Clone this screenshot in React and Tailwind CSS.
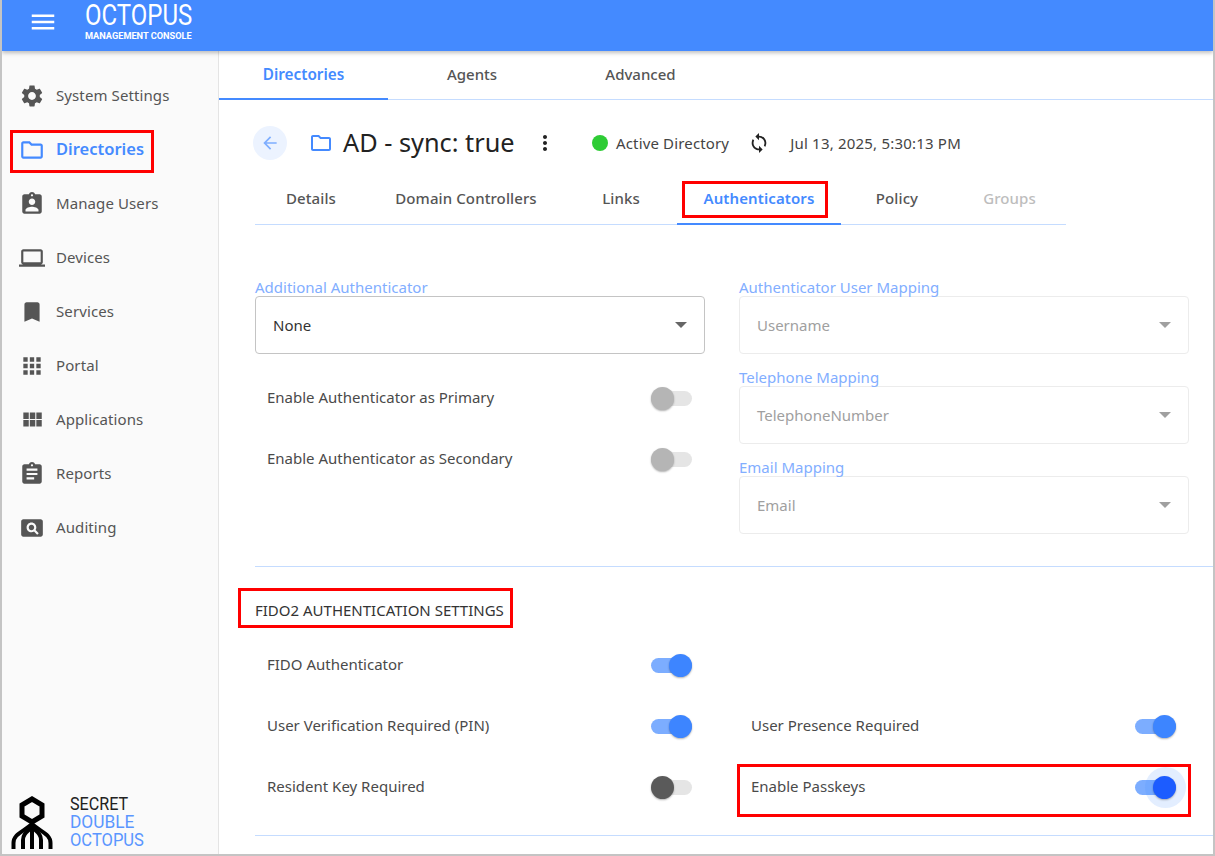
const icons = {
  menu: "M3 18h18v-2H3v2zm0-5h18v-2H3v2zm0-7v2h18V6H3z",
  settings: "M19.14 12.94c.04-.3.06-.61.06-.94 0-.32-.02-.64-.07-.94l2.03-1.58c.18-.14.23-.41.12-.61l-1.92-3.32c-.12-.22-.37-.29-.59-.22l-2.39.96c-.5-.38-1.03-.7-1.62-.94l-.36-2.54c-.04-.24-.24-.41-.48-.41h-3.84c-.24 0-.43.17-.47.41l-.36 2.54c-.59.24-1.13.57-1.62.94l-2.39-.96c-.22-.08-.47 0-.59.22L2.74 8.87c-.12.21-.08.47.12.61l2.03 1.58c-.05.3-.09.63-.09.94s.02.64.07.94l-2.03 1.58c-.18.14-.23.41-.12.61l1.92 3.32c.12.22.37.29.59.22l2.39-.96c.5.38 1.03.7 1.62.94l.36 2.54c.05.24.24.41.48.41h3.84c.24 0 .44-.17.47-.41l.36-2.54c.59-.24 1.13-.56 1.62-.94l2.39.96c.22.08.47 0 .59-.22l1.92-3.32c.12-.22.07-.47-.12-.61l-2.01-1.58zM12 15.6c-1.98 0-3.6-1.62-3.6-3.6s1.62-3.6 3.6-3.6 3.6 1.62 3.6 3.6-1.62 3.6-3.6 3.6z",
  folder: "M9.17 6l2 2H20v10H4V6h5.17M10 4H4c-1.1 0-1.99.9-1.99 2L2 18c0 1.1.9 2 2 2h16c1.1 0 2-.9 2-2V8c0-1.1-.9-2-2-2h-8l-2-2z",
  users: "M19 3h-4.18C14.4 1.84 13.3 1 12 1c-1.3 0-2.4.84-2.82 2H5c-1.1 0-2 .9-2 2v14c0 1.1.9 2 2 2h14c1.1 0 2-.9 2-2V5c0-1.1-.9-2-2-2zm-7 0c.55 0 1 .45 1 1s-.45 1-1 1-1-.45-1-1 .45-1 1-1zm0 4c1.66 0 3 1.34 3 3s-1.34 3-3 3-3-1.34-3-3 1.34-3 3-3zm6 12H6v-1.4c0-2 4-3.1 6-3.1s6 1.1 6 3.1V19z",
  laptop: "M20 18c1.1 0 1.99-.9 1.99-2L22 6c0-1.1-.9-2-2-2H4c-1.1 0-2 .9-2 2v10c0 1.1.9 2 2 2H0v2h24v-2h-4zM4 6h16v10H4V6z",
  bookmark: "M17 3H7c-1.1 0-1.99.9-1.99 2L5 21l7-3 7 3V5c0-1.1-.9-2-2-2z",
  apps: "M4 8h4V4H4v4zm6 12h4v-4h-4v4zm-6 0h4v-4H4v4zm0-6h4v-4H4v4zm6 0h4v-4h-4v4zm6-10v4h4V4h-4zm-6 4h4V4h-4v4zm6 6h4v-4h-4v4zm0 6h4v-4h-4v4z",
  module: "M4 11h5V5H4v6zm0 7h5v-6H4v6zm6 0h5v-6h-5v6zm6 0h5v-6h-5v6zm-6-7h5V5h-5v6zm6-6v6h5V5h-5z",
  reports: "M19 3h-4.18C14.4 1.84 13.3 1 12 1c-1.3 0-2.4.84-2.82 2H5c-1.1 0-2 .9-2 2v14c0 1.1.9 2 2 2h14c1.1 0 2-.9 2-2V5c0-1.1-.9-2-2-2zm-7 0c.55 0 1 .45 1 1s-.45 1-1 1-1-.45-1-1 .45-1 1-1zm2 14H7v-2h7v2zm3-4H7v-2h10v2zm0-4H7V7h10v2z",
  pageview: "M11.5 9C10.12 9 9 10.12 9 11.5s1.12 2.5 2.5 2.5 2.5-1.12 2.5-2.5S12.88 9 11.5 9zM20 4H4c-1.1 0-2 .9-2 2v12c0 1.1.9 2 2 2h16c1.1 0 2-.9 2-2V6c0-1.1-.9-2-2-2zm-3.21 14.21l-2.91-2.91c-.69.44-1.51.7-2.38.7C9 16 7 14 7 11.5S9 7 11.5 7 16 9 16 11.5c0 .88-.26 1.69-.7 2.39l2.91 2.9-1.42 1.42z",
  sync: "M12 4V1L8 5l4 4V6c3.31 0 6 2.69 6 6 0 1.01-.25 1.97-.7 2.8l1.46 1.46C19.54 15.03 20 13.57 20 12c0-4.42-3.58-8-8-8zm0 14c-3.31 0-6-2.69-6-6 0-1.01.25-1.97.7-2.8L5.24 7.74C4.46 8.97 4 10.43 4 12c0 4.42 3.58 8 8 8v3l4-4-4-4v3z",
  more: "M12 8c1.1 0 2-.9 2-2s-.9-2-2-2-2 .9-2 2 .9 2 2 2zm0 2c-1.1 0-2 .9-2 2s.9 2 2 2 2-.9 2-2-.9-2-2-2zm0 6c-1.1 0-2 .9-2 2s.9 2 2 2 2-.9 2-2-.9-2-2-2z",
  back: "M20 11H7.83l5.59-5.59L12 4l-8 8 8 8 1.41-1.41L7.83 13H20v-2z",
};

function Icon({ name, className }) {
  return (
    <svg viewBox="0 0 24 24" fill="currentColor" className={className}>
      <path d={icons[name]} />
    </svg>
  );
}

const navItems = [
  { label: "System Settings", icon: "settings" },
  { label: "Directories", icon: "folder", active: true },
  { label: "Manage Users", icon: "users" },
  { label: "Devices", icon: "laptop" },
  { label: "Services", icon: "bookmark" },
  { label: "Portal", icon: "apps" },
  { label: "Applications", icon: "module" },
  { label: "Reports", icon: "reports" },
  { label: "Auditing", icon: "pageview" },
];

const subTabs = [
  { label: "Details", w: "w-[112px]" },
  { label: "Domain Controllers", w: "w-[198px]" },
  { label: "Links", w: "w-[112px]" },
  { label: "Authenticators", w: "w-[164px]", active: true },
  { label: "Policy", w: "w-[112px]" },
  { label: "Groups", w: "w-[113px]", disabled: true },
];

function Toggle({ on, off, focus }) {
  return (
    <div className="relative h-[23px] w-[41px] shrink-0">
      <div className={`absolute left-0 right-0 top-[4px] h-[15px] rounded-full ${on ? "bg-[#448aff]/70" : "bg-[#e5e5e5]"} ${off ? "bg-[#e0e0e0]" : ""}`} />
      {focus && <div className="absolute right-[-10px] top-[-9px] h-[41px] w-[41px] rounded-full bg-[#448aff]/15" />}
      <div
        className={`absolute top-0 h-[23px] w-[23px] rounded-full shadow-[0_1px_2px_rgba(0,0,0,0.3)] ${on ? "right-0" : "left-0"} ${
          focus ? "bg-[#1c5cff]" : on ? "bg-[#3d85ff]" : off ? "bg-[#5a5a5a]" : "bg-[#b5b5b5]"
        }`}
      />
    </div>
  );
}

function ToggleRow({ label, className, children }) {
  return (
    <div className={`flex h-[23px] items-center justify-between text-[15px] text-[#4a4a4a] ${className || ""}`}>
      <span className="-mt-[2px]">{label}</span>
      {children}
    </div>
  );
}

function SelectField({ label, value, disabled }) {
  return (
    <div>
      <div className="h-[18px] text-[15px] leading-[18px] text-[#82aeff]">{label}</div>
      <div
        className={`flex h-[58px] items-center justify-between rounded border pl-[17px] pr-[17px] text-[15px] ${
          disabled ? "border-[#ececec] text-[#a0a0a0]" : "border-[#c4c4c4] text-[#333]"
        }`}
      >
        <span>{value}</span>
        <span className={`h-0 w-0 border-x-[6px] border-t-[6px] border-x-transparent ${disabled ? "border-t-[#a0a0a0]" : "border-t-[#666]"}`} />
      </div>
    </div>
  );
}

function LogoMark() {
  return (
    <svg viewBox="0 0 42 53" className="h-[53px] w-[42px]" fill="none" stroke="#000" strokeWidth="4">
      <path strokeWidth="5" d="M21 3 L31 9 V20 L21 26 L11 20 V9 Z" />
      <path d="M21 25 V53" />
      <path d="M2.5 53 V47 C2.5 38 12 36 21 28 C30 36 39.5 38 39.5 47 V53" />
      <path d="M12 53 V44 C12 38 16 36 21 31 C26 36 30 38 30 44 V53" />
    </svg>
  );
}

export default function App() {
  return (
    <div className="flex h-[856px] w-[1215px] flex-col overflow-hidden border-x-2 border-b-2 border-[#c4c4c4] bg-white font-['Noto_Sans',sans-serif]">
      <header className="z-10 flex h-[51px] shrink-0 items-start bg-[#448aff] shadow-[0_2px_4px_rgba(0,0,0,0.25)]">
        <Icon name="menu" className="ml-[26px] mt-[7px] h-[30px] w-[30px] text-white" />
        <div className="ml-[27px] flex h-full w-[110px] flex-col text-white">
          <div className="origin-left scale-x-[0.8] font-['Roboto',sans-serif] text-[30px] leading-[30px] whitespace-nowrap">OCTOPUS</div>
          <div className="mt-px font-['Roboto',sans-serif] text-[9.2px] font-bold leading-[10px] whitespace-nowrap">MANAGEMENT CONSOLE</div>
        </div>
      </header>

      <div className="flex min-h-0 flex-1">
        <aside className="flex w-[217px] shrink-0 flex-col justify-between border-r border-[#e4e4e4] bg-[#fafafa]">
          <nav className="pt-[18px]">
            {navItems.map((item) => (
              <div key={item.label} className={`relative flex h-[54px] items-center gap-[11px] pl-[17px] ${item.active ? "text-[16.5px] font-semibold text-[#448aff]" : "text-[15px] tracking-[0.1px] text-[#555]"}`}>
                <Icon name={item.icon} className="h-[26px] w-[26px] shrink-0" />
                <span className="-mt-px">{item.label}</span>
                {item.active && <div className="absolute left-[8px] top-[7px] h-[43px] w-[144px] border-[3px] border-[#f00]" />}
              </div>
            ))}
          </nav>
          <div className="flex items-end pb-[5px] pl-[9px]">
            <LogoMark />
            <div className="ml-[17px] font-['Roboto',sans-serif] text-[19px] leading-[18px] whitespace-nowrap">
              <div className="origin-left scale-x-[0.85] text-[#222]">SECRET</div>
              <div className="origin-left scale-x-[0.91] text-[#5a96ff]">DOUBLE</div>
              <div className="origin-left scale-x-[0.87] text-[#5a96ff]">OCTOPUS</div>
            </div>
          </div>
        </aside>

        <main className="min-w-0 flex-1">
          <div className="flex h-[49px] border-b border-[#c5dcff] text-[15px] font-medium text-[#555]">
            <div className="flex h-[49px] w-[169px] items-center justify-center border-b-2 border-[#448aff] text-[15.3px] font-semibold text-[#448aff]">Directories</div>
            <div className="flex w-[168px] items-center justify-center pb-[2px]">Agents</div>
            <div className="flex w-[169px] items-center justify-center pb-[2px]">Advanced</div>
          </div>

          <div className="pl-[36px]">
            <div className="mt-[26px] ml-[-2px] flex h-[34px] items-center">
              <div className="flex h-[34px] w-[34px] items-center justify-center rounded-full bg-[#ecf3ff]">
                <Icon name="back" className="h-[20px] w-[20px] text-[#7eaeff]" />
              </div>
              <Icon name="folder" className="ml-[22px] h-[24px] w-[24px] text-[#448aff]" />
              <h1 className="ml-[10px] -mt-[2px] w-[190px] text-[25.3px] leading-[34px] whitespace-nowrap text-[#222]">AD - sync: true</h1>
              <Icon name="more" className="h-[24px] w-[24px] text-[#222]" />
              <span className="ml-[35px] h-[16px] w-[16px] rounded-full bg-[#2ecc35]" />
              <span className="ml-[8px] text-[15px] tracking-[0.15px] text-[#444]">Active Directory</span>
              <Icon name="sync" className="ml-[19px] h-[22px] w-[22px] text-[#222]" />
              <span className="ml-[20px] text-[15px] tracking-[0.2px] text-[#444] whitespace-nowrap">Jul 13, 2025, 5:30:13 PM</span>
            </div>

            <div className="mt-[21px] flex h-[44px] w-[811px] border-b border-[#c5dcff] text-[15px] font-medium tracking-[0.1px]">
              {subTabs.map((tab) => (
                <div
                  key={tab.label}
                  className={`relative flex h-[44px] items-center justify-center whitespace-nowrap ${tab.w} ${
                    tab.active ? "border-b-2 border-[#448aff] pb-[8px] font-semibold text-[#448aff]" : tab.disabled ? "pb-[10px] text-[#bdbdbd]" : "pb-[10px] text-[#555]"
                  }`}
                >
                  {tab.label}
                  {tab.active && <div className="absolute left-[5px] top-0 h-[37px] w-[146px] border-[3px] border-[#f00]" />}
                </div>
              ))}
            </div>

            <div className="mt-[53px] flex w-[934px] gap-[34px]">
              <div className="w-[450px]">
                <SelectField label="Additional Authenticator" value="None" />
                <ToggleRow label="Enable Authenticator as Primary" className="mt-[33px] pl-[12px] pr-[13px]">
                  <Toggle />
                </ToggleRow>
                <ToggleRow label="Enable Authenticator as Secondary" className="mt-[38px] pl-[12px] pr-[13px]">
                  <Toggle />
                </ToggleRow>
              </div>
              <div className="flex w-[450px] flex-col gap-[14px]">
                <SelectField label="Authenticator User Mapping" value="Username" disabled />
                <SelectField label="Telephone Mapping" value="TelephoneNumber" disabled />
                <SelectField label="Email Mapping" value="Email" disabled />
              </div>
            </div>

            <div className="mt-[32px] border-t border-[#c5dcff]" />

            <div className="relative mt-[33px] h-[20px] text-[15px] leading-[20px] text-[#333]">
              FIDO2 AUTHENTICATION SETTINGS
              <div className="absolute left-[-17px] top-[-12px] h-[40px] w-[275px] border-[3px] border-[#f00]" />
            </div>

            <div className="mt-[34px] grid w-[934px] grid-cols-2 gap-x-[34px] gap-y-[38px] pl-[12px]">
              <ToggleRow label="FIDO Authenticator" className="w-[425px]">
                <Toggle on />
              </ToggleRow>
              <div />
              <ToggleRow label="User Verification Required (PIN)" className="w-[425px]">
                <Toggle on />
              </ToggleRow>
              <ToggleRow label="User Presence Required" className="ml-[6px] w-[425px]">
                <Toggle on />
              </ToggleRow>
              <ToggleRow label="Resident Key Required" className="w-[425px]">
                <Toggle off />
              </ToggleRow>
              <ToggleRow label="Enable Passkeys" className="relative ml-[6px] w-[425px]">
                <Toggle on focus />
                <div className="absolute left-[-14px] top-[-12px] h-[53px] w-[454px] border-[3px] border-[#f00]" />
              </ToggleRow>
            </div>

            <div className="mt-[36px] border-t border-[#c5dcff]" />
          </div>
        </main>
      </div>
    </div>
  );
}
